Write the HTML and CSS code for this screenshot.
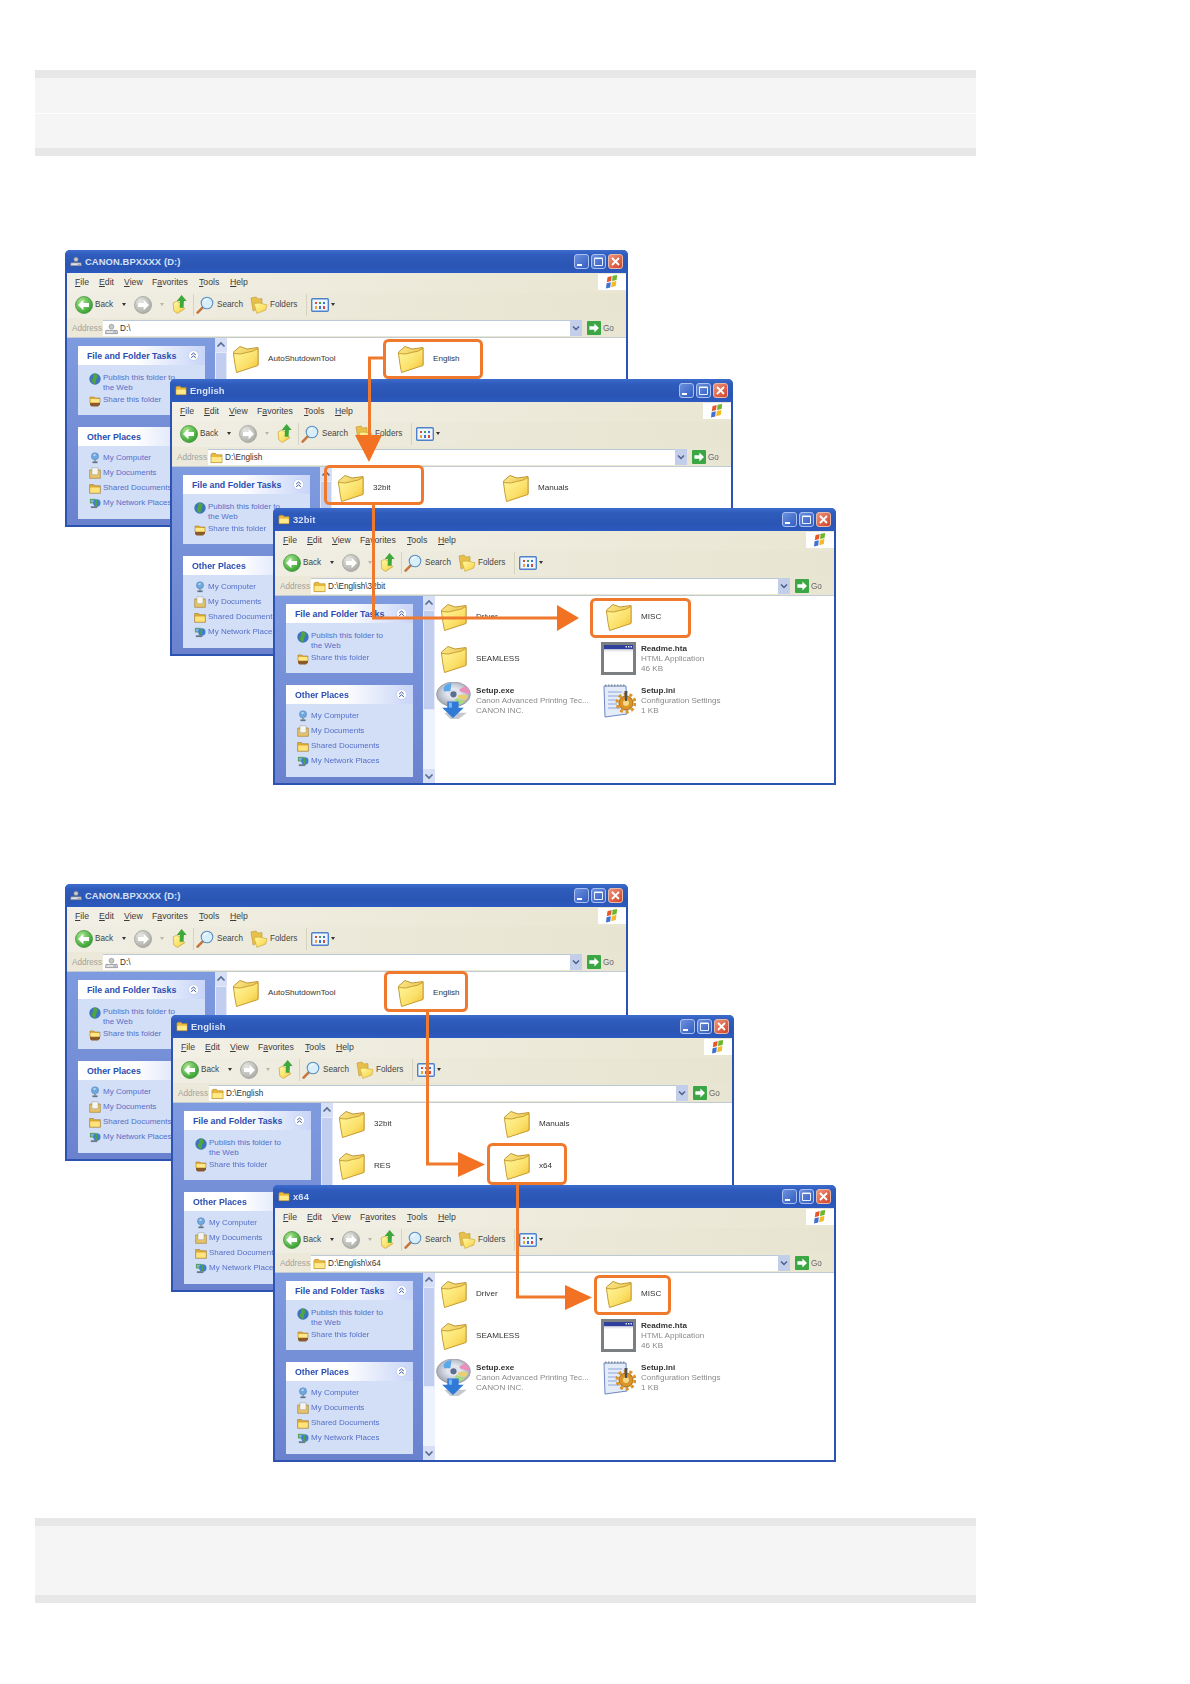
FILE: index.html
```html
<!DOCTYPE html>
<html lang="en">
<head>
<meta charset="utf-8">
<title>Folder navigation</title>
<link rel="stylesheet" href="styles.css">
</head>
<body>
<svg class="defs" aria-hidden="true">
  <defs>
    <linearGradient id="gf" x1="0" y1="0" x2="1" y2="1"><stop offset="0" stop-color="#fff9a0"/><stop offset=".6" stop-color="#fbe06a"/><stop offset="1" stop-color="#f0bf2c"/></linearGradient>
    <linearGradient id="gb" x1="0" y1="0" x2="1" y2="1"><stop offset="0" stop-color="#fbe98a"/><stop offset="1" stop-color="#e2b02c"/></linearGradient>
    <radialGradient id="gg" cx=".35" cy=".3" r=".8"><stop offset="0" stop-color="#a6e58a"/><stop offset="1" stop-color="#2a9a28"/></radialGradient>
    <radialGradient id="gy" cx=".35" cy=".3" r=".8"><stop offset="0" stop-color="#e6e6e2"/><stop offset="1" stop-color="#a5a6a0"/></radialGradient>
    <linearGradient id="gbtn" x1="0" y1="0" x2="1" y2="1"><stop offset="0" stop-color="#6f92e0"/><stop offset="1" stop-color="#2f5cc0"/></linearGradient>
    <linearGradient id="gred" x1="0" y1="0" x2="1" y2="1"><stop offset="0" stop-color="#ee9a80"/><stop offset="1" stop-color="#d23c24"/></linearGradient>
    <radialGradient id="gcd" cx=".5" cy=".45" r=".55"><stop offset="0" stop-color="#8fa3c8"/><stop offset=".3" stop-color="#e8eaf2"/><stop offset=".6" stop-color="#c9ced8"/><stop offset="1" stop-color="#9ea3b0"/></radialGradient>

    <symbol id="folder" viewBox="0 0 27 28">
      <path fill="url(#gb)" stroke="#b98f2a" stroke-width=".9" d="M1.500 7 8 1.500 15 4 26 2.500V20L5 27Z"/>
      <path fill="url(#gf)" stroke="#c49a30" stroke-width=".9" d="M1.500 8.500Q9 10 14.500 7.500 21 7 26 3.500V20.500L4.500 27.500Q2.800 20 1.500 8.500Z"/>
    </symbol>
    <symbol id="mini" viewBox="0 0 14 12">
      <path fill="#e8b93c" stroke="#a9802a" stroke-width=".6" d="M1 2.500 2 1h4l1 1.500h6V11H1Z"/>
      <path fill="#ffe98a" d="M1.600 5h11v5.400H1.600Z"/>
    </symbol>
    <symbol id="drive" viewBox="0 0 14 13">
      <circle cx="7" cy="4" r="2.600" fill="#c9c9c4" stroke="#77787a" stroke-width=".6"/>
      <path fill="#dfe1e4" stroke="#6f7278" stroke-width=".7" d="M1 8h12l.5 3.500H.5Z"/>
      <path fill="#8f95a0" d="M9 9.300h3v1H9Z"/>
    </symbol>
    <symbol id="btn-min" viewBox="0 0 15 15"><rect x=".5" y=".5" width="14" height="14" rx="2.500" fill="url(#gbtn)" stroke="#a9c0f0"/><rect x="3" y="10" width="5" height="2" fill="#fff"/></symbol>
    <symbol id="btn-max" viewBox="0 0 15 15"><rect x=".5" y=".5" width="14" height="14" rx="2.500" fill="url(#gbtn)" stroke="#a9c0f0"/><path fill="none" stroke="#e8eefb" d="M3.500 4.500h8v7h-8Z"/><path stroke="#fff" stroke-width="1.500" d="M3.500 4.300h8"/></symbol>
    <symbol id="btn-close" viewBox="0 0 15 15"><rect x=".5" y=".5" width="14" height="14" rx="2.500" fill="url(#gred)" stroke="#e8b8a8"/><path stroke="#fff" stroke-width="1.800" d="m4 4 7 7m0-7-7 7"/></symbol>
    <symbol id="flag" viewBox="0 0 14 14">
      <path fill="#e8562a" d="M2.500 2.200 6.600 1 6 6.100 1.800 7.200Z"/>
      <path fill="#6fb52e" d="M7.600.8 12.200 0 11.600 5 7 6Z"/>
      <path fill="#3f71d0" d="M1.600 8.200 5.800 7.200 5.200 12.500 1 13.600Z"/>
      <path fill="#f4bb26" d="M6.800 7 11.400 6 10.800 11 6.200 12.300Z"/>
    </symbol>
    <symbol id="back" viewBox="0 0 18 18"><circle cx="9" cy="9" r="8.500" fill="url(#gg)" stroke="#3a8a34" stroke-width=".7"/><path fill="#fff" d="M3 9 8.400 3.800V7H14v4H8.400v3.200Z"/></symbol>
    <symbol id="forward" viewBox="0 0 18 18"><circle cx="9" cy="9" r="8.500" fill="url(#gy)" stroke="#9a9b96" stroke-width=".7"/><path fill="#fff" d="M15 9 9.600 3.800V7H4v4h5.600v3.200Z"/></symbol>
    <symbol id="up" viewBox="0 0 14 18">
      <path fill="url(#gf)" stroke="#c29a32" stroke-width=".6" d="M1 7.500 4 6l3 1 5 6-7 4.500-3.400-2.500Z"/>
      <path fill="#3ea83a" d="M9 0 13.800 5.600H11.200L10.800 12H7.200L7.400 5.600H4.400Z"/>
    </symbol>
    <symbol id="search" viewBox="0 0 18 18">
      <path stroke="#c4763c" stroke-width="2.600" stroke-linecap="round" d="M7 11.200 1.600 16.600"/>
      <circle cx="11" cy="7" r="5.800" fill="#d9eefb" stroke="#5b8fc0" stroke-width="1.100"/>
      <path fill="#fff" d="M8.400 4.200a4 4 0 0 1 4.200-.6 6 6 0 0 0-4.800 3Z"/>
    </symbol>
    <symbol id="folders" viewBox="0 0 18 18">
      <path fill="#e8bf4a" stroke="#bd9736" stroke-width=".6" d="M1 2 6 1l2 2 4-.4V11L3 15Z"/>
      <path fill="url(#gf)" stroke="#c7a238" stroke-width=".6" d="M4 7.500 9 7l8 1.800-1.200 5.200-9 3.400Z"/>
    </symbol>
    <symbol id="views" viewBox="0 0 18 14">
      <rect x=".7" y=".7" width="16.600" height="12.600" rx="1" fill="#f0f6ff" stroke="#4f82c8" stroke-width="1.400"/>
      <path fill="#d64b3a" d="M4 4h2v2H4Z"/><path fill="#3fa14a" d="M8 4h2v2H8Z"/><path fill="#3f6fd0" d="M12 4h2v2h-2Z"/>
      <path fill="#e9a42f" d="M4 8h2v3H4Z"/><path fill="#3f6fd0" d="M8 8h2v3H8Z"/><path fill="#d64b3a" d="M12 8h2v3h-2Z"/>
    </symbol>
    <symbol id="go" viewBox="0 0 14 14"><rect width="14" height="14" rx="1" fill="#3ba644"/><path fill="#fff" d="M12 7 7.400 2.600v2.600H2.400v3.600h5v2.600Z"/></symbol>
    <symbol id="combo" viewBox="0 0 12 16"><rect width="12" height="16" fill="#c3cfea"/><path fill="none" stroke="#4c5f8c" stroke-width="1.500" d="m3 6.500 3 3 3-3"/></symbol>
    <symbol id="globe" viewBox="0 0 12 12"><circle cx="6" cy="6" r="5.700" fill="#3d74bd"/><path fill="#4fa63a" d="M5 .5C8 1 9.500 3 8 5 6.500 6.500 7.500 8.500 6 11.200 3.500 10 2 7.500 3.500 6 5 4.500 3.500 2.500 5 .5Z"/></symbol>
    <symbol id="share" viewBox="0 0 12 12"><path fill="#e2ad3a" stroke="#9a7426" stroke-width=".5" d="M1 2h4l1 1h5v5H1Z"/><path fill="#ffe88a" d="M1.500 4h9v3.500h-9Z"/><path fill="#8a5a2a" d="M1 8h10v1.500l-2 2H2.500L1 10Z"/></symbol>
    <symbol id="computer" viewBox="0 0 12 14"><circle cx="6" cy="5" r="4.200" fill="#6ea8e0" stroke="#48749e" stroke-width=".5"/><path fill="#b9d6f0" d="M3.500 3.500 6 2l1.500 1.500L5 5Z"/><path fill="#8aa0b4" d="M4.800 9h2.400v2H4.800Z"/><path fill="#5f7285" d="M3 11h6v2H3Z"/></symbol>
    <symbol id="docs" viewBox="0 0 12 12"><path fill="#e8c468" stroke="#9a7a2e" stroke-width=".6" d="M.7 3h10.600v8.300H.7Z"/><path fill="#f6f6f0" stroke="#8a8a90" stroke-width=".4" d="M3 .7h6v7H3Z"/></symbol>
    <symbol id="shared" viewBox="0 0 12 12"><path fill="#dcab34" stroke="#927024" stroke-width=".5" d="M.6 2.500h4l1 1.200h5.800v7.600H.6Z"/><path fill="#ffe37c" d="M1.200 5.500h9.600v5.200H1.200Z"/></symbol>
    <symbol id="network" viewBox="0 0 13 13"><path fill="#55a04a" d="M1 2h6v5H1Z"/><path fill="#7fb0e6" d="M2 3h4v3H2Z"/><circle cx="8.500" cy="6.500" r="4" fill="#3f7fd0"/><path fill="#4da341" d="M7.500 3c2 0 2.500 1.500 1.500 3s.5 2.500-.5 4.200C6.500 9 6 7 7 6s-.5-2 .5-3Z"/><path fill="#6b7887" d="M2 10h7v2H2Z"/></symbol>
    <symbol id="collapse" viewBox="0 0 11 11"><circle cx="5.500" cy="5.500" r="5" fill="#fff" stroke="#b9c7ee" stroke-width=".7"/><path fill="none" stroke="#33529f" stroke-width="1" d="m3.200 5 2.300-2 2.300 2m-4.600 2.800 2.300-2 2.300 2"/></symbol>
    <symbol id="sup" viewBox="0 0 12 14"><path fill="none" stroke="#5a6d96" stroke-width="1.700" d="m2.500 8.500 3.500-3.500 3.500 3.500"/></symbol>
    <symbol id="sdown" viewBox="0 0 12 14"><path fill="none" stroke="#5a6d96" stroke-width="1.700" d="m2.500 5.500 3.500 3.500 3.500-3.500"/></symbol>
    <symbol id="cd" viewBox="0 0 36 36">
      <ellipse cx="17" cy="12" rx="16.500" ry="12" fill="url(#gcd)" stroke="#8a8e98" stroke-width=".6"/>
      <path fill="#5aa8ea" d="M15 1C9 2 6 5 8 9l6 0Z"/>
      <path fill="#e890bc" d="M23 9l9 3c1-3-1-6-3-8l-6 3Z"/>
      <path fill="#e8d070" d="M22 12.500l9 .5c0 2-1 4-3 5l-7-3Z"/>
      <path fill="#a8dc7a" d="M18 17l5 5c2-.5 3.500-1.500 5-3l-8-3.500Z"/>
      <circle cx="17" cy="12" r="3.800" fill="#5b6f92" stroke="#e4e6ee" stroke-width="1.500"/>
      <path fill="#9ea3ad" opacity=".6" d="M8 30h22l-8 6H14Z"/>
      <path fill="#2f7ad6" d="M11 19h11v6h5L16.500 35 6 25h5Z"/>
      <path fill="#7eb6f0" d="M12.500 20h3v5h-3Z"/>
    </symbol>
    <symbol id="hta" viewBox="0 0 35 33">
      <rect x="1.500" y="1.500" width="32" height="30" fill="#fff" stroke="#7b7f82" stroke-width="3"/>
      <rect x="3" y="3" width="29" height="4.500" fill="#2f3f9c"/>
      <path fill="#e8e8ec" d="M3 7.500h29v2H3Z"/>
      <path fill="#dfe3ee" d="M27 4h1.500v1.500H27Zm2.500 0H31v1.500h-1.500Zm-5 0H26v1.500h-1.500Z"/>
    </symbol>
    <symbol id="ini" viewBox="0 0 33 35">
      <path fill="#e4ecfa" stroke="#6f87c0" d="M1 3h22l1 28-22 3Z"/>
      <path stroke="#8da6d8" stroke-width="1" d="M5 9h14M5 13h12M5 17h9M5 21h9M5 25h12"/>
      <path stroke="#80909e" stroke-width="2" stroke-dasharray="1.500 1.500" d="M2 2.500h20"/>
      <circle cx="23" cy="20" r="7" fill="#dc9426" stroke="#a86c16" stroke-width="1"/>
      <circle cx="23" cy="20" r="9" fill="none" stroke="#dc9426" stroke-width="3" stroke-dasharray="3 2.700"/>
      <circle cx="23" cy="20" r="3" fill="#f6d887"/>
      <path fill="#4f4f54" d="M21.500 8h3l-.5 10h-2Z"/>
    </symbol>
  </defs>
</svg>

<div class="page">
  <div class="band band-top"><div class="band-half"></div><div class="band-half"></div></div>

  <div class="shot shot-one">
    <section class="win w-a">
      <header class="title"><svg class="t-ico"><use href="#drive"/></svg><span class="t-text">CANON.BPXXXX (D:)</span><span class="ctrls"><svg class="c"><use href="#btn-min"/></svg><svg class="c"><use href="#btn-max"/></svg><svg class="c"><use href="#btn-close"/></svg></span></header>
      <nav class="menu"><span><u>F</u>ile</span><span><u>E</u>dit</span><span><u>V</u>iew</span><span>F<u>a</u>vorites</span><span><u>T</u>ools</span><span><u>H</u>elp</span><span class="flag"><svg class="flag-ico"><use href="#flag"/></svg></span></nav>
      <div class="tools"><svg class="nav"><use href="#back"/></svg><span>Back</span><i class="drop"></i><svg class="nav"><use href="#forward"/></svg><i class="drop faint"></i><svg class="up"><use href="#up"/></svg><i class="sep"></i><svg class="nav"><use href="#search"/></svg><span>Search</span><svg class="nav"><use href="#folders"/></svg><span>Folders</span><i class="sep"></i><svg class="view"><use href="#views"/></svg><i class="drop"></i></div>
      <div class="addr"><span class="a-label">Address</span><span class="a-input"><svg class="a-ico"><use href="#drive"/></svg>D:\</span><svg class="a-combo"><use href="#combo"/></svg><svg class="a-go"><use href="#go"/></svg><span class="a-gotext">Go</span></div>
      <div class="main">
        <aside class="side">
          <div class="box"><div class="box-h"><span>File and Folder Tasks</span><svg class="coll"><use href="#collapse"/></svg></div><ul class="box-b tasks"><li><svg class="si"><use href="#globe"/></svg><span>Publish this folder to the Web</span></li><li><svg class="si"><use href="#share"/></svg><span>Share this folder</span></li></ul></div>
          <div class="box"><div class="box-h"><span>Other Places</span><svg class="coll"><use href="#collapse"/></svg></div><ul class="box-b places"><li><svg class="si"><use href="#computer"/></svg><span>My Computer</span></li><li><svg class="si"><use href="#docs"/></svg><span>My Documents</span></li><li><svg class="si"><use href="#shared"/></svg><span>Shared Documents</span></li><li><svg class="si"><use href="#network"/></svg><span>My Network Places</span></li></ul></div>
        </aside>
        <div class="scroll"><svg class="s-btn"><use href="#sup"/></svg><i class="s-thumb"></i><i class="s-track"></i><svg class="s-btn"><use href="#sdown"/></svg></div>
        <div class="files">
          <div class="tile"><svg class="fi"><use href="#folder"/></svg><span>AutoShutdownTool</span></div>
          <div class="tile"><svg class="fi"><use href="#folder"/></svg><span>English</span></div>
        </div>
      </div>
    </section>

    <section class="win w-b">
      <header class="title"><svg class="t-ico"><use href="#mini"/></svg><span class="t-text">English</span><span class="ctrls"><svg class="c"><use href="#btn-min"/></svg><svg class="c"><use href="#btn-max"/></svg><svg class="c"><use href="#btn-close"/></svg></span></header>
      <nav class="menu"><span><u>F</u>ile</span><span><u>E</u>dit</span><span><u>V</u>iew</span><span>F<u>a</u>vorites</span><span><u>T</u>ools</span><span><u>H</u>elp</span><span class="flag"><svg class="flag-ico"><use href="#flag"/></svg></span></nav>
      <div class="tools"><svg class="nav"><use href="#back"/></svg><span>Back</span><i class="drop"></i><svg class="nav"><use href="#forward"/></svg><i class="drop faint"></i><svg class="up"><use href="#up"/></svg><i class="sep"></i><svg class="nav"><use href="#search"/></svg><span>Search</span><svg class="nav"><use href="#folders"/></svg><span>Folders</span><i class="sep"></i><svg class="view"><use href="#views"/></svg><i class="drop"></i></div>
      <div class="addr"><span class="a-label">Address</span><span class="a-input"><svg class="a-ico"><use href="#mini"/></svg>D:\English</span><svg class="a-combo"><use href="#combo"/></svg><svg class="a-go"><use href="#go"/></svg><span class="a-gotext">Go</span></div>
      <div class="main">
        <aside class="side">
          <div class="box"><div class="box-h"><span>File and Folder Tasks</span><svg class="coll"><use href="#collapse"/></svg></div><ul class="box-b tasks"><li><svg class="si"><use href="#globe"/></svg><span>Publish this folder to the Web</span></li><li><svg class="si"><use href="#share"/></svg><span>Share this folder</span></li></ul></div>
          <div class="box"><div class="box-h"><span>Other Places</span><svg class="coll"><use href="#collapse"/></svg></div><ul class="box-b places"><li><svg class="si"><use href="#computer"/></svg><span>My Computer</span></li><li><svg class="si"><use href="#docs"/></svg><span>My Documents</span></li><li><svg class="si"><use href="#shared"/></svg><span>Shared Documents</span></li><li><svg class="si"><use href="#network"/></svg><span>My Network Places</span></li></ul></div>
        </aside>
        <div class="scroll"><svg class="s-btn"><use href="#sup"/></svg><i class="s-thumb"></i><i class="s-track"></i><svg class="s-btn"><use href="#sdown"/></svg></div>
        <div class="files">
          <div class="tile"><svg class="fi"><use href="#folder"/></svg><span>32bit</span></div>
          <div class="tile"><svg class="fi"><use href="#folder"/></svg><span>Manuals</span></div>
        </div>
      </div>
    </section>

    <section class="win w-c">
      <header class="title"><svg class="t-ico"><use href="#mini"/></svg><span class="t-text">32bit</span><span class="ctrls"><svg class="c"><use href="#btn-min"/></svg><svg class="c"><use href="#btn-max"/></svg><svg class="c"><use href="#btn-close"/></svg></span></header>
      <nav class="menu"><span><u>F</u>ile</span><span><u>E</u>dit</span><span><u>V</u>iew</span><span>F<u>a</u>vorites</span><span><u>T</u>ools</span><span><u>H</u>elp</span><span class="flag"><svg class="flag-ico"><use href="#flag"/></svg></span></nav>
      <div class="tools"><svg class="nav"><use href="#back"/></svg><span>Back</span><i class="drop"></i><svg class="nav"><use href="#forward"/></svg><i class="drop faint"></i><svg class="up"><use href="#up"/></svg><i class="sep"></i><svg class="nav"><use href="#search"/></svg><span>Search</span><svg class="nav"><use href="#folders"/></svg><span>Folders</span><i class="sep"></i><svg class="view"><use href="#views"/></svg><i class="drop"></i></div>
      <div class="addr"><span class="a-label">Address</span><span class="a-input"><svg class="a-ico"><use href="#mini"/></svg>D:\English\32bit</span><svg class="a-combo"><use href="#combo"/></svg><svg class="a-go"><use href="#go"/></svg><span class="a-gotext">Go</span></div>
      <div class="main">
        <aside class="side">
          <div class="box"><div class="box-h"><span>File and Folder Tasks</span><svg class="coll"><use href="#collapse"/></svg></div><ul class="box-b tasks"><li><svg class="si"><use href="#globe"/></svg><span>Publish this folder to the Web</span></li><li><svg class="si"><use href="#share"/></svg><span>Share this folder</span></li></ul></div>
          <div class="box"><div class="box-h"><span>Other Places</span><svg class="coll"><use href="#collapse"/></svg></div><ul class="box-b places"><li><svg class="si"><use href="#computer"/></svg><span>My Computer</span></li><li><svg class="si"><use href="#docs"/></svg><span>My Documents</span></li><li><svg class="si"><use href="#shared"/></svg><span>Shared Documents</span></li><li><svg class="si"><use href="#network"/></svg><span>My Network Places</span></li></ul></div>
        </aside>
        <div class="scroll"><svg class="s-btn"><use href="#sup"/></svg><i class="s-thumb"></i><i class="s-track"></i><svg class="s-btn"><use href="#sdown"/></svg></div>
        <div class="files">
          <div class="tile"><svg class="fi"><use href="#folder"/></svg><span>Driver</span></div>
          <div class="tile"><svg class="fi"><use href="#folder"/></svg><span>MISC</span></div>
          <div class="tile"><svg class="fi"><use href="#folder"/></svg><span>SEAMLESS</span></div>
          <div class="tile"><svg class="fi-hta"><use href="#hta"/></svg><div class="meta"><b>Readme.hta</b><span>HTML Application</span><span>46 KB</span></div></div>
          <div class="tile"><svg class="fi-cd"><use href="#cd"/></svg><div class="meta"><b>Setup.exe</b><span>Canon Advanced Printing Tec...</span><span>CANON INC.</span></div></div>
          <div class="tile"><svg class="fi-ini"><use href="#ini"/></svg><div class="meta"><b>Setup.ini</b><span>Configuration Settings</span><span>1 KB</span></div></div>
        </div>
      </div>
    </section>

    <svg class="arrows" viewBox="0 230 1190 570">
      <rect class="hl" x="384.500" y="340.500" width="97" height="37" rx="4"/>
      <rect class="hl" x="325.500" y="466.500" width="97" height="37" rx="4"/>
      <rect class="hl" x="591.500" y="599.500" width="98" height="37" rx="4"/>
      <path class="ln" d="M384 358H369.500V437"/>
      <path class="hd" d="M355 435h27l-13 27Z"/>
      <path class="ln" d="M373.500 504V618H558"/>
      <path class="hd" d="M557 605v26l22-13Z"/>
    </svg>
  </div>

  <div class="shot shot-two">
    <section class="win w-a">
      <header class="title"><svg class="t-ico"><use href="#drive"/></svg><span class="t-text">CANON.BPXXXX (D:)</span><span class="ctrls"><svg class="c"><use href="#btn-min"/></svg><svg class="c"><use href="#btn-max"/></svg><svg class="c"><use href="#btn-close"/></svg></span></header>
      <nav class="menu"><span><u>F</u>ile</span><span><u>E</u>dit</span><span><u>V</u>iew</span><span>F<u>a</u>vorites</span><span><u>T</u>ools</span><span><u>H</u>elp</span><span class="flag"><svg class="flag-ico"><use href="#flag"/></svg></span></nav>
      <div class="tools"><svg class="nav"><use href="#back"/></svg><span>Back</span><i class="drop"></i><svg class="nav"><use href="#forward"/></svg><i class="drop faint"></i><svg class="up"><use href="#up"/></svg><i class="sep"></i><svg class="nav"><use href="#search"/></svg><span>Search</span><svg class="nav"><use href="#folders"/></svg><span>Folders</span><i class="sep"></i><svg class="view"><use href="#views"/></svg><i class="drop"></i></div>
      <div class="addr"><span class="a-label">Address</span><span class="a-input"><svg class="a-ico"><use href="#drive"/></svg>D:\</span><svg class="a-combo"><use href="#combo"/></svg><svg class="a-go"><use href="#go"/></svg><span class="a-gotext">Go</span></div>
      <div class="main">
        <aside class="side">
          <div class="box"><div class="box-h"><span>File and Folder Tasks</span><svg class="coll"><use href="#collapse"/></svg></div><ul class="box-b tasks"><li><svg class="si"><use href="#globe"/></svg><span>Publish this folder to the Web</span></li><li><svg class="si"><use href="#share"/></svg><span>Share this folder</span></li></ul></div>
          <div class="box"><div class="box-h"><span>Other Places</span><svg class="coll"><use href="#collapse"/></svg></div><ul class="box-b places"><li><svg class="si"><use href="#computer"/></svg><span>My Computer</span></li><li><svg class="si"><use href="#docs"/></svg><span>My Documents</span></li><li><svg class="si"><use href="#shared"/></svg><span>Shared Documents</span></li><li><svg class="si"><use href="#network"/></svg><span>My Network Places</span></li></ul></div>
        </aside>
        <div class="scroll"><svg class="s-btn"><use href="#sup"/></svg><i class="s-thumb"></i><i class="s-track"></i><svg class="s-btn"><use href="#sdown"/></svg></div>
        <div class="files">
          <div class="tile"><svg class="fi"><use href="#folder"/></svg><span>AutoShutdownTool</span></div>
          <div class="tile"><svg class="fi"><use href="#folder"/></svg><span>English</span></div>
        </div>
      </div>
    </section>

    <section class="win w-d">
      <header class="title"><svg class="t-ico"><use href="#mini"/></svg><span class="t-text">English</span><span class="ctrls"><svg class="c"><use href="#btn-min"/></svg><svg class="c"><use href="#btn-max"/></svg><svg class="c"><use href="#btn-close"/></svg></span></header>
      <nav class="menu"><span><u>F</u>ile</span><span><u>E</u>dit</span><span><u>V</u>iew</span><span>F<u>a</u>vorites</span><span><u>T</u>ools</span><span><u>H</u>elp</span><span class="flag"><svg class="flag-ico"><use href="#flag"/></svg></span></nav>
      <div class="tools"><svg class="nav"><use href="#back"/></svg><span>Back</span><i class="drop"></i><svg class="nav"><use href="#forward"/></svg><i class="drop faint"></i><svg class="up"><use href="#up"/></svg><i class="sep"></i><svg class="nav"><use href="#search"/></svg><span>Search</span><svg class="nav"><use href="#folders"/></svg><span>Folders</span><i class="sep"></i><svg class="view"><use href="#views"/></svg><i class="drop"></i></div>
      <div class="addr"><span class="a-label">Address</span><span class="a-input"><svg class="a-ico"><use href="#mini"/></svg>D:\English</span><svg class="a-combo"><use href="#combo"/></svg><svg class="a-go"><use href="#go"/></svg><span class="a-gotext">Go</span></div>
      <div class="main">
        <aside class="side">
          <div class="box"><div class="box-h"><span>File and Folder Tasks</span><svg class="coll"><use href="#collapse"/></svg></div><ul class="box-b tasks"><li><svg class="si"><use href="#globe"/></svg><span>Publish this folder to the Web</span></li><li><svg class="si"><use href="#share"/></svg><span>Share this folder</span></li></ul></div>
          <div class="box"><div class="box-h"><span>Other Places</span><svg class="coll"><use href="#collapse"/></svg></div><ul class="box-b places"><li><svg class="si"><use href="#computer"/></svg><span>My Computer</span></li><li><svg class="si"><use href="#docs"/></svg><span>My Documents</span></li><li><svg class="si"><use href="#shared"/></svg><span>Shared Documents</span></li><li><svg class="si"><use href="#network"/></svg><span>My Network Places</span></li></ul></div>
        </aside>
        <div class="scroll"><svg class="s-btn"><use href="#sup"/></svg><i class="s-thumb"></i><i class="s-track"></i><svg class="s-btn"><use href="#sdown"/></svg></div>
        <div class="files">
          <div class="tile"><svg class="fi"><use href="#folder"/></svg><span>32bit</span></div>
          <div class="tile"><svg class="fi"><use href="#folder"/></svg><span>Manuals</span></div>
          <div class="tile"><svg class="fi"><use href="#folder"/></svg><span>RES</span></div>
          <div class="tile"><svg class="fi"><use href="#folder"/></svg><span>x64</span></div>
        </div>
      </div>
    </section>

    <section class="win w-e">
      <header class="title"><svg class="t-ico"><use href="#mini"/></svg><span class="t-text">x64</span><span class="ctrls"><svg class="c"><use href="#btn-min"/></svg><svg class="c"><use href="#btn-max"/></svg><svg class="c"><use href="#btn-close"/></svg></span></header>
      <nav class="menu"><span><u>F</u>ile</span><span><u>E</u>dit</span><span><u>V</u>iew</span><span>F<u>a</u>vorites</span><span><u>T</u>ools</span><span><u>H</u>elp</span><span class="flag"><svg class="flag-ico"><use href="#flag"/></svg></span></nav>
      <div class="tools"><svg class="nav"><use href="#back"/></svg><span>Back</span><i class="drop"></i><svg class="nav"><use href="#forward"/></svg><i class="drop faint"></i><svg class="up"><use href="#up"/></svg><i class="sep"></i><svg class="nav"><use href="#search"/></svg><span>Search</span><svg class="nav"><use href="#folders"/></svg><span>Folders</span><i class="sep"></i><svg class="view"><use href="#views"/></svg><i class="drop"></i></div>
      <div class="addr"><span class="a-label">Address</span><span class="a-input"><svg class="a-ico"><use href="#mini"/></svg>D:\English\x64</span><svg class="a-combo"><use href="#combo"/></svg><svg class="a-go"><use href="#go"/></svg><span class="a-gotext">Go</span></div>
      <div class="main">
        <aside class="side">
          <div class="box"><div class="box-h"><span>File and Folder Tasks</span><svg class="coll"><use href="#collapse"/></svg></div><ul class="box-b tasks"><li><svg class="si"><use href="#globe"/></svg><span>Publish this folder to the Web</span></li><li><svg class="si"><use href="#share"/></svg><span>Share this folder</span></li></ul></div>
          <div class="box"><div class="box-h"><span>Other Places</span><svg class="coll"><use href="#collapse"/></svg></div><ul class="box-b places"><li><svg class="si"><use href="#computer"/></svg><span>My Computer</span></li><li><svg class="si"><use href="#docs"/></svg><span>My Documents</span></li><li><svg class="si"><use href="#shared"/></svg><span>Shared Documents</span></li><li><svg class="si"><use href="#network"/></svg><span>My Network Places</span></li></ul></div>
        </aside>
        <div class="scroll"><svg class="s-btn"><use href="#sup"/></svg><i class="s-thumb"></i><i class="s-track"></i><svg class="s-btn"><use href="#sdown"/></svg></div>
        <div class="files">
          <div class="tile"><svg class="fi"><use href="#folder"/></svg><span>Driver</span></div>
          <div class="tile"><svg class="fi"><use href="#folder"/></svg><span>MISC</span></div>
          <div class="tile"><svg class="fi"><use href="#folder"/></svg><span>SEAMLESS</span></div>
          <div class="tile"><svg class="fi-hta"><use href="#hta"/></svg><div class="meta"><b>Readme.hta</b><span>HTML Application</span><span>46 KB</span></div></div>
          <div class="tile"><svg class="fi-cd"><use href="#cd"/></svg><div class="meta"><b>Setup.exe</b><span>Canon Advanced Printing Tec...</span><span>CANON INC.</span></div></div>
          <div class="tile"><svg class="fi-ini"><use href="#ini"/></svg><div class="meta"><b>Setup.ini</b><span>Configuration Settings</span><span>1 KB</span></div></div>
        </div>
      </div>
    </section>

    <svg class="arrows" viewBox="0 864 1190 620">
      <rect class="hl" x="385.500" y="972.500" width="81" height="38" rx="4"/>
      <rect class="hl" x="488.500" y="1144.500" width="77" height="39" rx="4"/>
      <rect class="hl" x="595.500" y="1276.500" width="74" height="37" rx="4"/>
      <path class="ln" d="M427.500 1011V1164H459"/>
      <path class="hd" d="M458 1152v25l27-12.500Z"/>
      <path class="ln" d="M517.500 1184V1297H566"/>
      <path class="hd" d="M565 1285v25l27-12.500Z"/>
    </svg>
  </div>

  <div class="band band-bottom"></div>
</div>
</body>
</html>
```

FILE: styles.css
```css
* { box-sizing: border-box; }
html, body { margin: 0; padding: 0; background: #fff; }
body { font-family: "Liberation Sans", Arial, sans-serif; color: #333; }
.defs { position: absolute; width: 0; height: 0; overflow: hidden; }
.page { padding: 70px 0 81px; }

/* Grey bands */
.band { width: 941px; margin-left: 35px; background: #f5f5f5; border-top: 8px solid #e7e7e7; border-bottom: 8px solid #e7e7e7; filter: blur(.5px); }
.band-top { height: 86px; display: flex; flex-direction: column; }
.band-half { flex: 1; }
.band-half + .band-half { border-top: 1px solid #fff; }
.band-bottom { height: 85px; margin-top: 34px; }

/* Shots */
.shot { position: relative; width: 1190px; filter: blur(.55px); }
.shot-one { height: 570px; margin-top: 74px; }
.shot-two { height: 620px; margin-top: 64px; }
.arrows { position: absolute; left: 0; top: 0; width: 1190px; height: 100%; }
.hl { fill: none; stroke: #ef7a2e; stroke-width: 3; }
.ln { fill: none; stroke: #ef7a2e; stroke-width: 3; }
.hd { fill: #f27122; }

/* XP window */
.win { position: absolute; width: 563px; height: 277px; display: flex; flex-direction: column; padding: 0 2px 2px; border-radius: 5px 5px 0 0; background: #2c52b2; }
.w-a { left: 65px; top: 20px; }
.w-b { left: 170px; top: 149px; }
.w-c { left: 273px; top: 278px; }
.w-d { left: 171px; top: 151px; }
.w-e { left: 273px; top: 321px; }

.title { height: 23px; flex: none; display: flex; align-items: center; margin: 0 -2px; padding: 0 5px; border-radius: 5px 5px 0 0; background: linear-gradient(180deg, #3c6ccc 0, #2f5cbc 22%, #2a55b4 70%, #2c5ac0 100%); }
.t-ico { width: 12px; height: 11px; flex: none; }
.t-text { margin-left: 3px; color: #d6e1f8; font-size: 9.400px; font-weight: bold; letter-spacing: .1px; }
.ctrls { margin-left: auto; display: flex; gap: 2px; }
.c { width: 15px; height: 15px; display: block; }

.menu { height: 20px; flex: none; display: grid; grid-template-columns: 24px 25px 28px 47px 31px 30px 1fr; align-items: center; padding: 0 0 4px 8px; background: linear-gradient(90deg, #f2f0e6, #e9e6d3); font-size: 8.700px; color: #3c3c3c; }
.menu u { text-decoration-thickness: .6px; }
.flag { justify-self: end; align-self: start; width: 28px; height: 16px; margin-top: 1px; background: #fff; display: flex; align-items: center; justify-content: center; }
.flag-ico { width: 14px; height: 14px; }

.tools { height: 25px; flex: none; display: grid; grid-template-columns: 20px 27px 12px 20px 18px 21px 3px 21px 33px 20px 36px 5px 20px 8px; align-items: center; padding: 0 0 2px 8px; background: linear-gradient(90deg, #f0eee3, #e7e4d0); font-size: 8.200px; color: #444; }
.nav { width: 18px; height: 18px; display: block; }
.up { width: 15px; height: 19px; display: block; }
.view { width: 18px; height: 14px; display: block; }
.drop { width: 0; height: 0; border: 2.500px solid transparent; border-top: 3px solid #333; border-bottom: 0; display: block; justify-self: start; }
.faint { border-top-color: #b5b5a8; margin-left: 6px; }
.sep { width: 1px; height: 22px; background: #d6d3c0; display: block; }

.addr { height: 20px; flex: none; display: grid; grid-template-columns: 31px 467px 12px 17px 1fr; align-items: center; padding: 1px 0 0 5px; background: linear-gradient(90deg, #ece9da, #e8e5d2); font-size: 8.200px; color: #999; border-bottom: 1px solid #c0cbd4; }
.a-label { color: #a3a39a; }
.a-input { height: 16px; display: flex; align-items: center; gap: 2px; padding-left: 2px; background: #fff; border-top: 1px solid #bac8d8; color: #333; font-size: 8.200px; }
.a-ico { width: 13px; height: 12px; flex: none; }
.a-combo { width: 12px; height: 16px; display: block; }
.a-go { width: 14px; height: 14px; display: block; margin-left: 5px; }
.a-gotext { color: #666; padding-left: 4px; }

.main { flex: 1; min-height: 0; display: flex; }
.side { width: 148px; flex: none; padding: 8px 10px 0 11px; background: linear-gradient(180deg, #7f9be0, #6a82ce); display: flex; flex-direction: column; gap: 12px; overflow: hidden; }
.box-h { height: 19px; display: flex; align-items: center; justify-content: space-between; padding: 0 6px 0 9px; background: linear-gradient(90deg, #fff 45%, #c8d5f8); color: #2b4eb0; font-size: 8.800px; font-weight: bold; white-space: nowrap; }
.coll { width: 11px; height: 11px; flex: none; }
.box-b { margin: 0; list-style: none; background: #d3def7; padding: 8px 0 0 11px; font-size: 8px; color: #5570c8; }
.box-b li { display: flex; gap: 2px; }
.si { width: 12px; height: 12px; flex: none; }
.tasks { height: 50px; }
.tasks li { line-height: 10px; }
.tasks li + li { margin-top: 2px; }
.tasks span { max-width: 80px; }
.places { height: 73px; padding-top: 4px; }
.places li { height: 15px; align-items: center; white-space: nowrap; }

.scroll { width: 12px; flex: none; display: flex; flex-direction: column; background: #eef2fc; }
.s-btn { width: 12px; height: 14px; flex: none; display: block; background: #d6dff5; }
.s-thumb { height: 100px; flex: none; background: #c2cef0; border: 1px solid #e4eafa; }
.s-track { flex: 1; }

.files { flex: 1; min-width: 0; display: grid; grid-template-columns: 165px 165px; grid-auto-rows: 41px; row-gap: 1px; align-content: start; padding: 0 0 0 5px; background: #fff; font-size: 8.100px; color: #333; overflow: hidden; }
.tile { display: grid; grid-template-columns: 36px 1fr; align-items: center; white-space: nowrap; }
.fi { width: 27px; height: 28px; display: block; }
.fi-hta { width: 35px; height: 33px; display: block; margin-left: -4px; }
.fi-cd { width: 37px; height: 37px; display: block; margin-left: -4px; }
.fi-ini { width: 33px; height: 35px; display: block; margin-left: -2px; }
.meta { display: flex; flex-direction: column; line-height: 10px; color: #8a8a8a; }
.meta b { color: #333; }
```
